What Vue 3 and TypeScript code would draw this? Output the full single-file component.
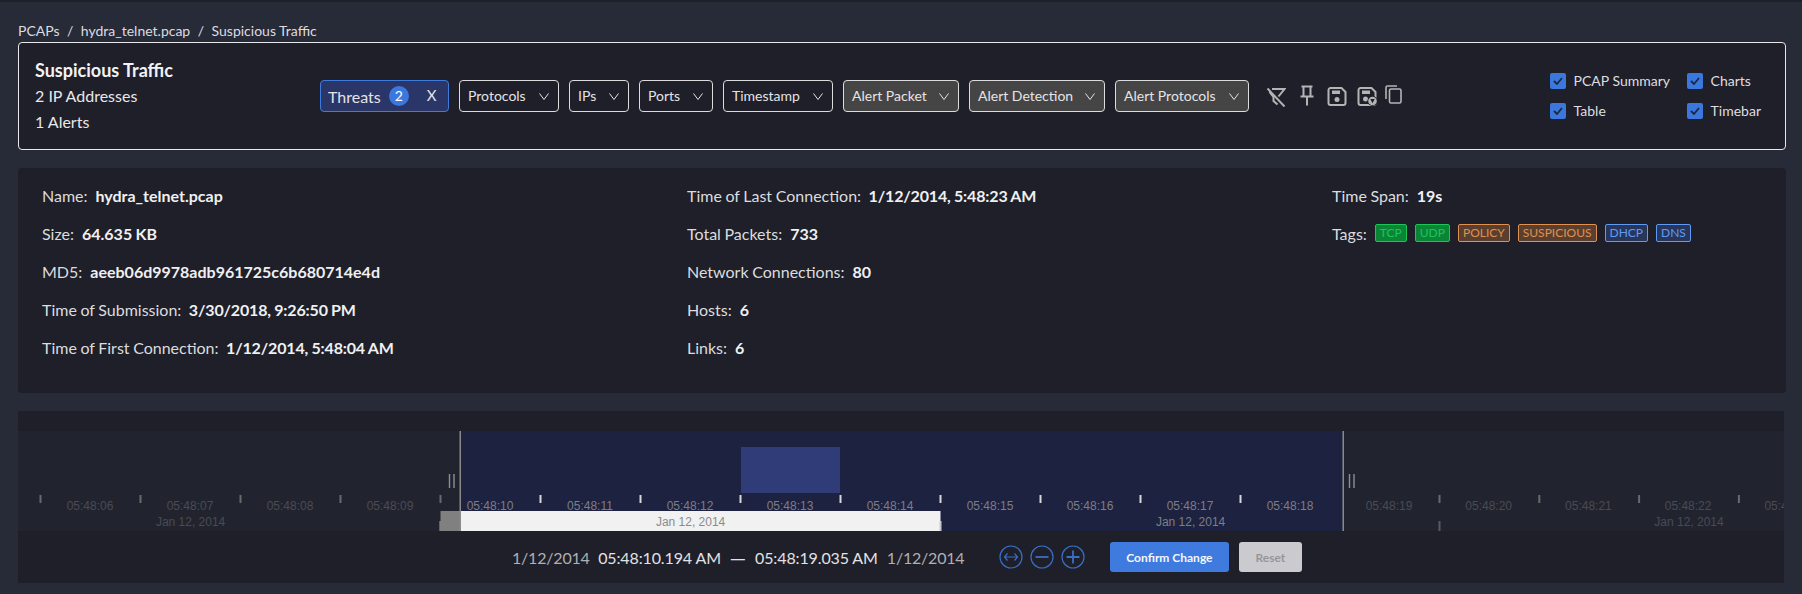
<template>
  <div class="page">
    <nav class="crumbs">
      <span>PCAPs</span>
      <span class="sep">/</span>
      <span>hydra_telnet.pcap</span>
      <span class="sep">/</span>
      <span>Suspicious Traffic</span>
    </nav>

    <section class="toolbar">
      <div class="heading">
        <h1>Suspicious Traffic</h1>
        <p>2 IP Addresses</p>
        <p>1 Alerts</p>
      </div>

      <div class="filters">
        <button class="filter active">
          <span class="threats">Threats</span>
          <span class="badge">2</span>
          <span class="clear">X</span>
        </button>
        <button v-for="f in filters" :key="f.label" class="filter" :class="{ alert: f.alert }">
          <span class="filter-label">{{ f.label }}</span>
          <svg class="chev" width="10" height="7" viewBox="0 0 10 7">
            <path d="M.5 .5L5 6.5 9.5 .5" fill="none" stroke="currentColor" stroke-width="1" />
          </svg>
        </button>
      </div>

      <div class="tools">
        <svg width="20" height="20" viewBox="0 0 20 20" class="tool-filter">
          <path d="M6 2h12.5l-6 7.5M7.5 10L3.5 5M7.5 9.5v4.500l4 3.500" fill="none" stroke="currentColor" stroke-width="2" />
          <path d="M1.500 1.500l17 18" stroke="currentColor" stroke-width="2" />
        </svg>
        <svg width="18" height="21" viewBox="0 0 18 21" class="tool-pin">
          <path d="M3.500 1.500h11M5.500 1.500v10M12.500 1.500v10M2.500 11.500h13M9 11.500v9" fill="none" stroke="currentColor" stroke-width="2" />
        </svg>
        <svg width="20" height="19" viewBox="0 0 20 19" class="tool-save first">
          <path d="M3.500 1h11l4 4v11a2 2 0 0 1-2 2h-13a2 2 0 0 1-2-2V3a2 2 0 0 1 2-2z" fill="none" stroke="currentColor" stroke-width="2" />
          <path d="M5 3.500h8V7H5z" fill="currentColor" />
          <circle cx="10" cy="12.500" r="2.500" fill="currentColor" />
        </svg>
        <svg width="22" height="19" viewBox="0 0 22 19" class="tool-save second">
          <path d="M3.500 1h11l4 4v11a2 2 0 0 1-2 2h-13a2 2 0 0 1-2-2V3a2 2 0 0 1 2-2z" fill="none" stroke="currentColor" stroke-width="2" />
          <path d="M5 3.500h8V7H5z" fill="currentColor" />
          <circle cx="8.500" cy="12" r="2.500" fill="currentColor" />
          <circle cx="15.500" cy="14" r="5" fill="#1e1f29" />
          <circle cx="15.500" cy="14" r="4.300" fill="currentColor" />
          <path d="M13.300 12h4.400l-2.200 4.300z" fill="#1e1f29" />
        </svg>
        <svg width="17" height="19" viewBox="0 0 17 19" class="tool-copy">
          <path d="M1 14V2.500A1.500 1.500 0 0 1 2.500 1H12" fill="none" stroke="currentColor" stroke-width="1.600" />
          <rect x="4.500" y="4" width="11.500" height="14" rx="1.500" fill="none" stroke="currentColor" stroke-width="1.600" />
        </svg>
      </div>

      <div class="toggles">
        <label v-for="t in toggles" :key="t" class="toggle">
          <span class="box">
            <svg width="10" height="8" viewBox="0 0 10 8">
              <path d="M1 4l3 3 5-6" fill="none" stroke="#1e2740" stroke-width="1.800" />
            </svg>
          </span>
          <span>{{ t }}</span>
        </label>
      </div>
    </section>

    <section class="details">
      <div v-for="(col, i) in columns" :key="i" class="col">
        <div v-for="row in col" :key="row[0]" class="row">
          <span class="key">{{ row[0] }}:</span>
          <strong :class="{ stamp: row[1].includes(', ') }">{{ row[1] }}</strong>
        </div>
        <div v-if="i === 2" class="row tags-row">
          <span class="key">Tags:</span>
          <span v-for="tag in tags" :key="tag.name" class="tag" :class="tag.kind">{{ tag.name }}</span>
        </div>
      </div>
    </section>

    <section class="timebar">
      <div class="timebar-top"></div>
      <svg class="chart" width="1766" height="100" viewBox="0 0 1766 100">
        <rect x="442.5" y="0" width="882.5" height="100" fill="#1c2240" />
        <rect x="723" y="16" width="99" height="46" fill="#303c78" />
        <rect x="442.5" y="80" width="480" height="20" fill="#f1f1f1" />
        <rect x="422.5" y="80" width="20" height="20" fill="#808080" />
        <rect x="421.3" y="90" width="2" height="10" fill="#808080" />
        <rect x="921.5" y="90" width="2" height="10" fill="#c8c8c8" />

        <rect
          v-for="t in ticks"
          :key="t.x"
          :x="t.x"
          y="64"
          width="2"
          height="8"
          :fill="t.on ? '#d8d8d8' : '#6a6a6a'"
        />
        <rect x="1420.5" y="90" width="2" height="10" fill="#5a5a5a" />

        <text
          v-for="l in labels"
          :key="l.text"
          :x="l.x"
          y="79"
          text-anchor="middle"
          class="axis"
          :fill="l.on ? '#7c7e88' : '#494b54'"
        >{{ l.text }}</text>
        <text
          v-for="d in dates"
          :key="d.x"
          :x="d.x"
          y="95"
          text-anchor="middle"
          class="axis"
          :fill="d.color"
        >Jan 12, 2014</text>

        <rect x="441.5" y="0" width="1.5" height="100" fill="#8a8a8a" />
        <rect x="1324.5" y="0" width="1.5" height="100" fill="#8a8a8a" />
        <path d="M431.5 43v14M436 43v14M1331.5 43v14M1336 43v14" stroke="#8f8f8f" stroke-width="1.4" />
      </svg>

      <div class="range">
        <span class="day">1/12/2014</span>
        <span class="time">05:48:10.194 AM</span>
        <span class="dash">—</span>
        <span class="time second">05:48:19.035 AM</span>
        <span class="day last">1/12/2014</span>
        <div class="zoom">
          <svg width="24" height="24" viewBox="0 0 24 24">
            <circle cx="12" cy="12" r="11" />
            <path d="M5.5 12h13M8.5 8.5L5.5 12l3 3.5M15.5 8.5l3 3.5-3 3.5" />
          </svg>
          <svg width="24" height="24" viewBox="0 0 24 24">
            <circle cx="12" cy="12" r="11" />
            <path d="M5.5 12h13" class="thick" />
          </svg>
          <svg width="24" height="24" viewBox="0 0 24 24">
            <circle cx="12" cy="12" r="11" />
            <path d="M5.5 12h13M12 5.5v13" class="thick" />
          </svg>
        </div>
        <button class="btn primary">Confirm Change</button>
        <button class="btn muted">Reset</button>
      </div>
    </section>
  </div>
</template>

<script setup lang="ts">
const filters = [
  { label: 'Protocols' },
  { label: 'IPs' },
  { label: 'Ports' },
  { label: 'Timestamp' },
  { label: 'Alert Packet', alert: true },
  { label: 'Alert Detection', alert: true },
  { label: 'Alert Protocols', alert: true }
]

const toggles = ['PCAP Summary', 'Charts', 'Table', 'Timebar']

const columns: [string, string][][] = [
  [
    ['Name', 'hydra_telnet.pcap'],
    ['Size', '64.635 KB'],
    ['MD5', 'aeeb06d9978adb961725c6b680714e4d'],
    ['Time of Submission', '3/30/2018, 9:26:50 PM'],
    ['Time of First Connection', '1/12/2014, 5:48:04 AM']
  ],
  [
    ['Time of Last Connection', '1/12/2014, 5:48:23 AM'],
    ['Total Packets', '733'],
    ['Network Connections', '80'],
    ['Hosts', '6'],
    ['Links', '6']
  ],
  [['Time Span', '19s']]
]

const tags = [
  { name: 'TCP', kind: 'green' },
  { name: 'UDP', kind: 'green' },
  { name: 'POLICY', kind: 'orange' },
  { name: 'SUSPICIOUS', kind: 'orange' },
  { name: 'DHCP', kind: 'blue' },
  { name: 'DNS', kind: 'blue' }
]

// axis positions are relative to the chart, one second is about 100px
const ticks = [
  ...Array.from({ length: 13 }, (_, i) => ({ x: 21.5 + i * 100, on: i >= 5 })),
  ...Array.from({ length: 4 }, (_, i) => ({ x: 1420.5 + i * 99.8, on: false }))
]

const labels = [
  ...Array.from({ length: 13 }, (_, i) => ({
    text: `05:48:${String(i + 6).padStart(2, '0')}`,
    x: 72 + i * 100,
    on: i >= 4
  })),
  ...Array.from({ length: 5 }, (_, i) => ({
    text: `05:48:${i + 19}`,
    x: 1371 + i * 99.7,
    on: false
  }))
]

const dates = [
  { x: 172.6, color: '#494b54' },
  { x: 672.6, color: '#8b8b8b' },
  { x: 1172.6, color: '#7c7e88' },
  { x: 1671, color: '#494b54' }
]
</script>

<style>
html,
body {
  background: #272a37;
}
</style>

<style scoped>
.page {
  box-sizing: border-box;
  height: 594px;
  padding: 21px 16px 0 18px;
  border-top: 2px solid #1e1f27;
  overflow: hidden;
  font-family: Lato, 'Open Sans', sans-serif;
  color: #e8e8ea;
}

.crumbs {
  display: flex;
  gap: 7.5px;
  height: 16px;
  font-size: 14px;
  line-height: 16px;
  color: #dcdce0;
}

.toolbar {
  box-sizing: border-box;
  display: flex;
  align-items: center;
  height: 108px;
  margin-top: 3px;
  padding: 0 24px 0 16px;
  background: #1e1f29;
  border: 1px solid #e8e8ea;
  border-radius: 4px;
}

.heading {
  width: 285px;
  flex: none;
}

.heading h1 {
  margin: 0;
  font-size: 18px;
  line-height: 26px;
  font-weight: 700;
  color: #f2f2f4;
}

.heading p {
  margin: 0;
  font-size: 16px;
  line-height: 26px;
}

.filters {
  display: grid;
  grid-template-columns: 129px 100px 60px 74px 110px 116px 136px 134px;
  gap: 10px;
}

.filter {
  display: flex;
  align-items: center;
  justify-content: space-between;
  height: 32px;
  box-sizing: border-box;
  padding: 0 9px 0 8px;
  background: transparent;
  border: 1px solid #dcdcde;
  border-radius: 4px;
  font-family: inherit;
  font-size: 14px;
  color: #e4e4e6;
}

.filter-label {
  padding-bottom: 2px;
}

.filter.alert {
  background: #454545;
}

.filter.active {
  justify-content: flex-start;
  padding-left: 7px;
  background: #2a3568;
  border-color: #3f7ade;
}

.threats {
  font-size: 16px;
}

.badge {
  width: 20px;
  height: 20px;
  margin-left: 8px;
  border-radius: 50%;
  background: #3b78dd;
  font-size: 14px;
  line-height: 20px;
  color: #fff;
}

.clear {
  margin-left: 18px;
  padding-bottom: 2px;
  font-size: 15px;
}

.chev {
  flex: none;
}

.tools {
  display: flex;
  align-items: flex-start;
  height: 22px;
  margin-left: 17px;
  color: #b4b4b6;
}

.tool-filter {
  margin: 2px 11.5px 0 0;
}

.tool-pin {
  margin-right: 11.5px;
}

.tool-save {
  margin-top: 2px;
}

.tool-save.first {
  margin-right: 10px;
}

.tool-save.second {
  margin-right: 6px;
}

.toggles {
  display: grid;
  grid-template-columns: 137px auto;
  row-gap: 14px;
  margin-left: auto;
}

.toggle {
  display: flex;
  align-items: center;
  gap: 7.5px;
  height: 16px;
  font-size: 14px;
  line-height: 14px;
  color: #dedee0;
}

.box {
  display: flex;
  align-items: center;
  justify-content: center;
  width: 16px;
  height: 16px;
  border-radius: 2px;
  background: #3b78dd;
}

.details {
  display: grid;
  grid-template-columns: 645px 645px 1fr;
  box-sizing: border-box;
  height: 225px;
  margin-top: 18px;
  padding: 8px 24px;
  background: #1e1f29;
  border-radius: 4px;
}

.row {
  display: flex;
  align-items: center;
  height: 38px;
  font-size: 16px;
  word-spacing: -0.5px;
  color: #dcdcde;
}

.row strong {
  margin-left: 8px;
  font-weight: 700;
  color: #f0f0f2;
  white-space: nowrap;
}

.row strong.stamp {
  margin-left: 7.5px;
  letter-spacing: -0.15px;
}

.tags-row {
  gap: 8px;
}

.tag {
  box-sizing: border-box;
  height: 18px;
  padding: 0 4px;
  border: 1px solid;
  border-radius: 2px;
  font-size: 12px;
  line-height: 16px;
}

.tag.green {
  background: #0a8536;
  border-color: #1cc558;
  color: #1cc558;
}

.tag.orange {
  background: #5a3f2e;
  border-color: #e09050;
  color: #e09050;
}

.tag.blue {
  background: #27365a;
  border-color: #5f9bf5;
  color: #5f9bf5;
}

.timebar {
  box-sizing: border-box;
  width: 1766px;
  height: 172px;
  margin-top: 18px;
  background: #1e1f29;
}

.timebar-top {
  height: 20px;
}

.chart {
  display: block;
  background: #21242f;
}

.axis {
  font-family: 'Liberation Sans', Arial, sans-serif;
  font-size: 12px;
}

.range {
  display: flex;
  align-items: center;
  height: 52px;
  padding-left: 494px;
  font-size: 16px;
}

.day {
  letter-spacing: -0.2px;
  color: #b0b0b4;
}

.day.last {
  margin-left: 9px;
}

.time {
  margin-left: 8.5px;
  letter-spacing: -0.12px;
  color: #e2e2e4;
}

.time.second {
  margin-left: 0;
}

.dash {
  margin: 0 9px 0 8.5px;
  font-size: 21px;
  line-height: 21px;
  color: #e2e2e4;
}

.zoom {
  display: flex;
  gap: 7px;
  margin: 0 25px 0 34.5px;
}

.zoom svg {
  fill: none;
  stroke: #3a6fc4;
  stroke-width: 1.2;
}

.zoom .thick {
  stroke-width: 1.8;
}

.btn {
  box-sizing: border-box;
  height: 30px;
  border: none;
  border-radius: 3px;
  font-family: inherit;
  font-size: 12px;
  font-weight: 700;
}

.primary {
  width: 119px;
  background: #3f7ade;
  color: #f4f6fb;
}

.muted {
  width: 63px;
  margin-left: 10px;
  background: #cbcbcf;
  color: #96969a;
}
</style>
